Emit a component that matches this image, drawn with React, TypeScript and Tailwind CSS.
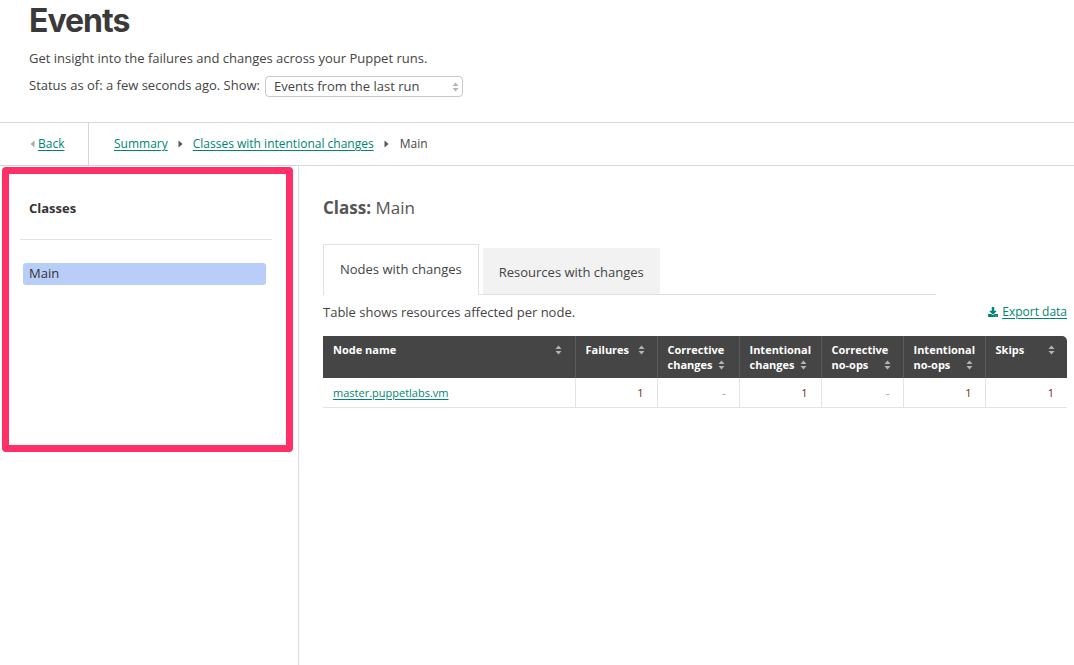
import React from 'react';
import { FaDownload } from 'react-icons/fa';

const SortIcon: React.FC<{ className?: string }> = ({ className = '' }) => (
  <svg width="7" height="10" viewBox="0 0 7 10" className={className}>
    <path d="M3.5 0.5 L6.5 4 L0.5 4 Z" fill="#b5b5b5" />
    <path d="M3.5 9.5 L6.5 6 L0.5 6 Z" fill="#b5b5b5" />
  </svg>
);

const Caret: React.FC<{ dir?: 'left' | 'right'; color?: string }> = ({ dir = 'right', color = '#555' }) => (
  <svg width="5" height="8" viewBox="0 0 5 8" className="shrink-0">
    {dir === 'right' ? <path d="M0.5 0.5 L4.5 4 L0.5 7.5 Z" fill={color} /> : <path d="M4.5 0.5 L0.5 4 L4.5 7.5 Z" fill={color} />}
  </svg>
);

type Col = { l1: string; l2?: string; inline?: boolean };

const COLUMNS: Col[] = [
  { l1: 'Failures' },
  { l1: 'Corrective', l2: 'changes', inline: true },
  { l1: 'Intentional', l2: 'changes', inline: true },
  { l1: 'Corrective', l2: 'no-ops' },
  { l1: 'Intentional', l2: 'no-ops' },
  { l1: 'Skips' },
];

const ROW = ['1', '-', '1', '-', '1', '1'];

const linkCls = 'text-[#008570] underline underline-offset-2 decoration-[#008570]';

const App: React.FC = () => {
  return (
    <div className="w-[1074px] h-[665px] overflow-hidden bg-white text-[#444] font-['Open_Sans',sans-serif] text-[13px] flex flex-col">
      {/* Page header */}
      <header className="pl-[29px] pb-[25px]">
        <h1 className="mt-[1px] font-['Inter',sans-serif] font-bold text-[32px] leading-[40px] text-[#3a3a3a] tracking-[-1px]">Events</h1>
        <p className="mt-[7px] leading-[20px]">Get insight into the failures and changes across your Puppet runs.</p>
        <div className="mt-[7px] flex items-center h-[22px]">
          <span>Status as of: a few seconds ago. Show:</span>
          <div className="relative ml-[5px]">
            <select className="appearance-none w-[198px] h-[21px] border border-[#c8c8c8] rounded-[4px] pl-[8px] text-[13px] leading-[19px] text-[#444] bg-white outline-none">
              <option>Events from the last run</option>
            </select>
            <SortIcon className="absolute right-[4px] top-[6px]" />
          </div>
        </div>
      </header>

      {/* Breadcrumb bar */}
      <nav className="h-[44px] border-y border-[#d6d6d6] flex items-stretch text-[12px]">
        <div className="w-[89px] border-r border-[#d6d6d6] flex items-center pl-[30px] gap-[3px]">
          <Caret dir="left" color="#aaa" />
          <a className={linkCls}>Back</a>
        </div>
        <div className="flex items-center pl-[25px]">
          <a className={linkCls}>Summary</a>
          <span className="mx-[10px]"><Caret /></span>
          <a className={linkCls}>Classes with intentional changes</a>
          <span className="ml-[10px] mr-[11px]"><Caret /></span>
          <span className="text-[#444]">Main</span>
        </div>
      </nav>

      <div className="flex flex-1 min-h-0">
        {/* Sidebar */}
        <aside className="w-[299px] shrink-0 border-r border-[#dcdcdc]">
          <div className="ml-[2px] mt-[1px] w-[291px] h-[285px] border-[7px] border-[#ff3068] rounded-[4px]">
            <h2 className="pl-[20px] pt-[24px] font-bold text-[13px] leading-[20px] text-[#333]">Classes</h2>
            <hr className="mt-[21px] ml-[11px] mr-[14px] border-t border-[#e2e2e2]" />
            <div className="mt-[23px] ml-[14px] mr-[20px] h-[22px] rounded-[3px] bg-[#b9cdf9] pl-[6px] flex items-center text-[#333]">
              Main
            </div>
          </div>
        </aside>

        {/* Main content */}
        <main className="flex-1 pl-[24px] pt-[30px]">
          <h2 className="text-[17px] leading-[24px] text-[#555]">
            <span className="font-bold">Class:</span> Main
          </h2>

          <div className="mt-[24px] w-[613px] flex items-end border-b border-[#e0e0e0]">
            <div className="h-[51px] -mb-px bg-white border border-b-0 border-[#e0e0e0] px-[16px] flex items-center text-[#444]">
              Nodes with changes
            </div>
            <div className="ml-[4px] h-[46px] bg-[#f2f2f2] px-[16px] pt-[4px] flex items-center text-[#444]">
              Resources with changes
            </div>
          </div>

          <div className="mt-[7px] w-[744px] flex items-center justify-between leading-[20px]">
            <span>Table shows resources affected per node.</span>
            <a className={`${linkCls} flex items-center gap-[4px] text-[12px]`}>
              <FaDownload className="text-[10px] text-[#008570]" />
              <span className="underline underline-offset-2">Export data</span>
            </a>
          </div>

          <table className="mt-[14px] w-[744px] table-fixed border-collapse text-[11px]">
            <colgroup>
              <col className="w-[252px]" />
              {COLUMNS.map((_, i) => (
                <col key={i} className="w-[82px]" />
              ))}
            </colgroup>
            <thead>
              <tr className="h-[42px] bg-[#454545] text-white font-bold">
                <th className="align-top pt-[6px] pl-[10px] pr-[13px] text-left border-r border-[#5a5a5a]">
                  <div className="flex items-center leading-[15px]">
                    <span>Node name</span>
                    <SortIcon className="ml-auto" />
                  </div>
                </th>
                {COLUMNS.map((c, i) => (
                  <th
                    key={i}
                    className={`align-top pt-[6px] pl-[10px] pr-[12px] text-left leading-[15px] ${i < COLUMNS.length - 1 ? 'border-r border-[#5a5a5a]' : 'rounded-tr-[5px]'}`}
                  >
                    {c.l2 ? (
                      <>
                        <div>{c.l1}</div>
                        <div className="flex items-center">
                          <span>{c.l2}</span>
                          <SortIcon className={c.inline ? 'ml-[6px]' : 'ml-auto'} />
                        </div>
                      </>
                    ) : (
                      <div className="flex items-center">
                        <span>{c.l1}</span>
                        <SortIcon className="ml-auto" />
                      </div>
                    )}
                  </th>
                ))}
              </tr>
            </thead>
            <tbody>
              <tr className="h-[29px] border-b border-[#e3e3e3]">
                <td className="pl-[10px] pt-[1px] border-r border-[#e3e3e3]">
                  <a className={linkCls}>master.puppetlabs.vm</a>
                </td>
                {ROW.map((v, i) => (
                  <td
                    key={i}
                    className={`text-right pt-[1px] pr-[13px] ${v === '-' ? 'text-[#999]' : 'text-[#6e2a20]'} ${i < ROW.length - 1 ? 'border-r border-[#e3e3e3]' : ''}`}
                  >
                    {v}
                  </td>
                ))}
              </tr>
            </tbody>
          </table>
        </main>
      </div>
    </div>
  );
};

export default App;
